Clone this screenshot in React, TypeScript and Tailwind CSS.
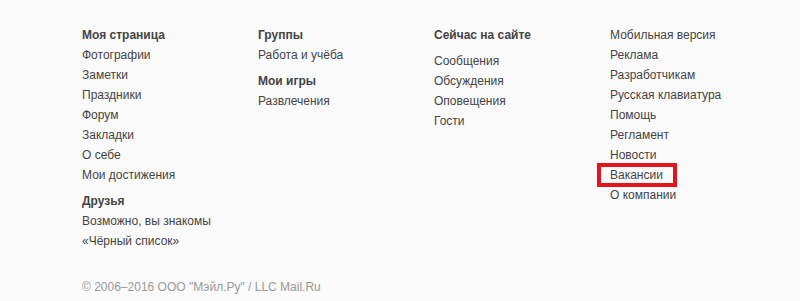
const columns: { title?: string; items: string[]; gapFirst?: boolean }[][] = [
  [
    {
      title: "Моя страница",
      items: ["Фотографии", "Заметки", "Праздники", "Форум", "Закладки", "О себе", "Мои достижения"],
    },
    { title: "Друзья", items: ["Возможно, вы знакомы", "«Чёрный список»"] },
  ],
  [
    { title: "Группы", items: ["Работа и учёба"] },
    { title: "Мои игры", items: ["Развлечения"] },
  ],
  [{ title: "Сейчас на сайте", items: ["Сообщения", "Обсуждения", "Оповещения", "Гости"], gapFirst: true }],
  [
    {
      items: [
        "Мобильная версия",
        "Реклама",
        "Разработчикам",
        "Русская клавиатура",
        "Помощь",
        "Регламент",
        "Новости",
        "Вакансии",
        "О компании",
      ],
    },
  ],
];

export default function App() {
  return (
    <div className="w-[800px] h-[301px] bg-[#fafafa] text-[12px] leading-5 text-[#444] font-['Liberation_Sans',Arial,sans-serif] pl-[82px] pt-[25px] flex flex-col">
      <div className="grid grid-cols-[176px_176px_176px_176px]">
        {columns.map((sections, ci) => (
          <div key={ci} className="flex flex-col">
            {sections.map((s, si) => (
              <div key={si} className={si > 0 ? "mt-1.5" : ""}>
                {s.title && <div className="font-bold text-[#444]">{s.title}</div>}
                <div className={s.gapFirst ? "mt-1.5" : ""}>
                  {s.items.map((item) => (
                    <div key={item} className="relative">
                      {item === "Вакансии" && (
                        <div className="absolute -left-[13px] -top-[2px] w-[80px] h-[24px] border-4 border-[#e3141c]" />
                      )}
                      <span className="relative">{item}</span>
                    </div>
                  ))}
                </div>
              </div>
            ))}
          </div>
        ))}
      </div>
      <div className="mt-auto mb-1 text-[#999]">© 2006–2016 ООО "Мэйл.Ру" / LLC Mail.Ru</div>
    </div>
  );
}
